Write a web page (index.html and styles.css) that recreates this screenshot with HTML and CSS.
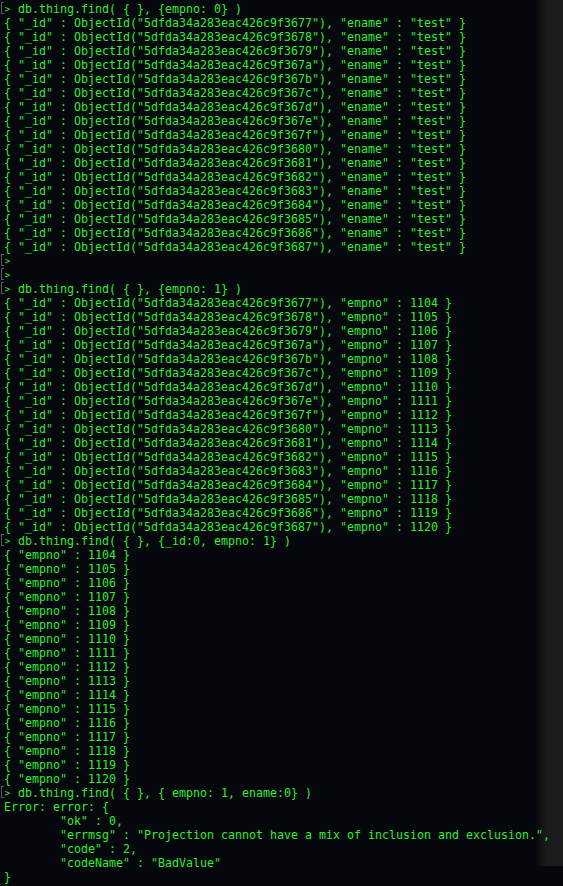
FILE: index.html
```html
<!DOCTYPE html>
<html lang="en">
<head>
  <meta charset="UTF-8">
  <meta name="viewport" content="width=device-width, initial-scale=1.0">
  <title>mongo shell</title>
  <link rel="stylesheet" href="styles.css">
</head>
<body>
  <main class="terminal">
<pre class="output"><span class="prompt"><span class="caret">&gt;</span> db.thing.find( { }, {empno: 0} )</span>
{ "_id" : ObjectId("5dfda34a283eac426c9f3677"), "ename" : "test" }
{ "_id" : ObjectId("5dfda34a283eac426c9f3678"), "ename" : "test" }
{ "_id" : ObjectId("5dfda34a283eac426c9f3679"), "ename" : "test" }
{ "_id" : ObjectId("5dfda34a283eac426c9f367a"), "ename" : "test" }
{ "_id" : ObjectId("5dfda34a283eac426c9f367b"), "ename" : "test" }
{ "_id" : ObjectId("5dfda34a283eac426c9f367c"), "ename" : "test" }
{ "_id" : ObjectId("5dfda34a283eac426c9f367d"), "ename" : "test" }
{ "_id" : ObjectId("5dfda34a283eac426c9f367e"), "ename" : "test" }
{ "_id" : ObjectId("5dfda34a283eac426c9f367f"), "ename" : "test" }
{ "_id" : ObjectId("5dfda34a283eac426c9f3680"), "ename" : "test" }
{ "_id" : ObjectId("5dfda34a283eac426c9f3681"), "ename" : "test" }
{ "_id" : ObjectId("5dfda34a283eac426c9f3682"), "ename" : "test" }
{ "_id" : ObjectId("5dfda34a283eac426c9f3683"), "ename" : "test" }
{ "_id" : ObjectId("5dfda34a283eac426c9f3684"), "ename" : "test" }
{ "_id" : ObjectId("5dfda34a283eac426c9f3685"), "ename" : "test" }
{ "_id" : ObjectId("5dfda34a283eac426c9f3686"), "ename" : "test" }
{ "_id" : ObjectId("5dfda34a283eac426c9f3687"), "ename" : "test" }
<span class="prompt"><span class="caret">&gt;</span></span>
<span class="prompt"><span class="caret">&gt;</span></span>
<span class="prompt"><span class="caret">&gt;</span> db.thing.find( { }, {empno: 1} )</span>
{ "_id" : ObjectId("5dfda34a283eac426c9f3677"), "empno" : 1104 }
{ "_id" : ObjectId("5dfda34a283eac426c9f3678"), "empno" : 1105 }
{ "_id" : ObjectId("5dfda34a283eac426c9f3679"), "empno" : 1106 }
{ "_id" : ObjectId("5dfda34a283eac426c9f367a"), "empno" : 1107 }
{ "_id" : ObjectId("5dfda34a283eac426c9f367b"), "empno" : 1108 }
{ "_id" : ObjectId("5dfda34a283eac426c9f367c"), "empno" : 1109 }
{ "_id" : ObjectId("5dfda34a283eac426c9f367d"), "empno" : 1110 }
{ "_id" : ObjectId("5dfda34a283eac426c9f367e"), "empno" : 1111 }
{ "_id" : ObjectId("5dfda34a283eac426c9f367f"), "empno" : 1112 }
{ "_id" : ObjectId("5dfda34a283eac426c9f3680"), "empno" : 1113 }
{ "_id" : ObjectId("5dfda34a283eac426c9f3681"), "empno" : 1114 }
{ "_id" : ObjectId("5dfda34a283eac426c9f3682"), "empno" : 1115 }
{ "_id" : ObjectId("5dfda34a283eac426c9f3683"), "empno" : 1116 }
{ "_id" : ObjectId("5dfda34a283eac426c9f3684"), "empno" : 1117 }
{ "_id" : ObjectId("5dfda34a283eac426c9f3685"), "empno" : 1118 }
{ "_id" : ObjectId("5dfda34a283eac426c9f3686"), "empno" : 1119 }
{ "_id" : ObjectId("5dfda34a283eac426c9f3687"), "empno" : 1120 }
<span class="prompt"><span class="caret">&gt;</span> db.thing.find( { }, {_id:0, empno: 1} )</span>
{ "empno" : 1104 }
{ "empno" : 1105 }
{ "empno" : 1106 }
{ "empno" : 1107 }
{ "empno" : 1108 }
{ "empno" : 1109 }
{ "empno" : 1110 }
{ "empno" : 1111 }
{ "empno" : 1112 }
{ "empno" : 1113 }
{ "empno" : 1114 }
{ "empno" : 1115 }
{ "empno" : 1116 }
{ "empno" : 1117 }
{ "empno" : 1118 }
{ "empno" : 1119 }
{ "empno" : 1120 }
<span class="prompt"><span class="caret">&gt;</span> db.thing.find( { }, { empno: 1, ename:0} )</span>
Error: error: {
	"ok" : 0,
	"errmsg" : "Projection cannot have a mix of inclusion and exclusion.",
	"code" : 2,
	"codeName" : "BadValue"
}</pre>
  </main>
</body>
</html>
```

FILE: styles.css
```css
html {
  background-color: #04070b;
}

body {
  margin: 0;
  padding: 0;
  min-height: 886px;
  background-color: #04070b;
  background-image: linear-gradient(to right, rgba(0, 0, 0, 0) 535px, #1b1b1b 546px);
  background-size: 100% 866px;
  background-repeat: no-repeat;
}

.terminal {
  padding: 2px 0 0 4px;
}

.output {
  margin: 0;
  font-family: "DejaVu Sans Mono", monospace;
  font-size: 11.63px;
  line-height: 14px;
  color: #33ec33;
  white-space: pre;
  tab-size: 8;
}

.prompt::before {
  content: "";
  display: inline-block;
  width: 2px;
  height: 10px;
  margin-left: -3px;
  border: 1px solid #5c5c5c;
  border-right: none;
  vertical-align: -1px;
}

.caret {
  display: inline-block;
  width: 7px;
  font-size: 9px;
  text-align: center;
  vertical-align: 1px;
}
```
